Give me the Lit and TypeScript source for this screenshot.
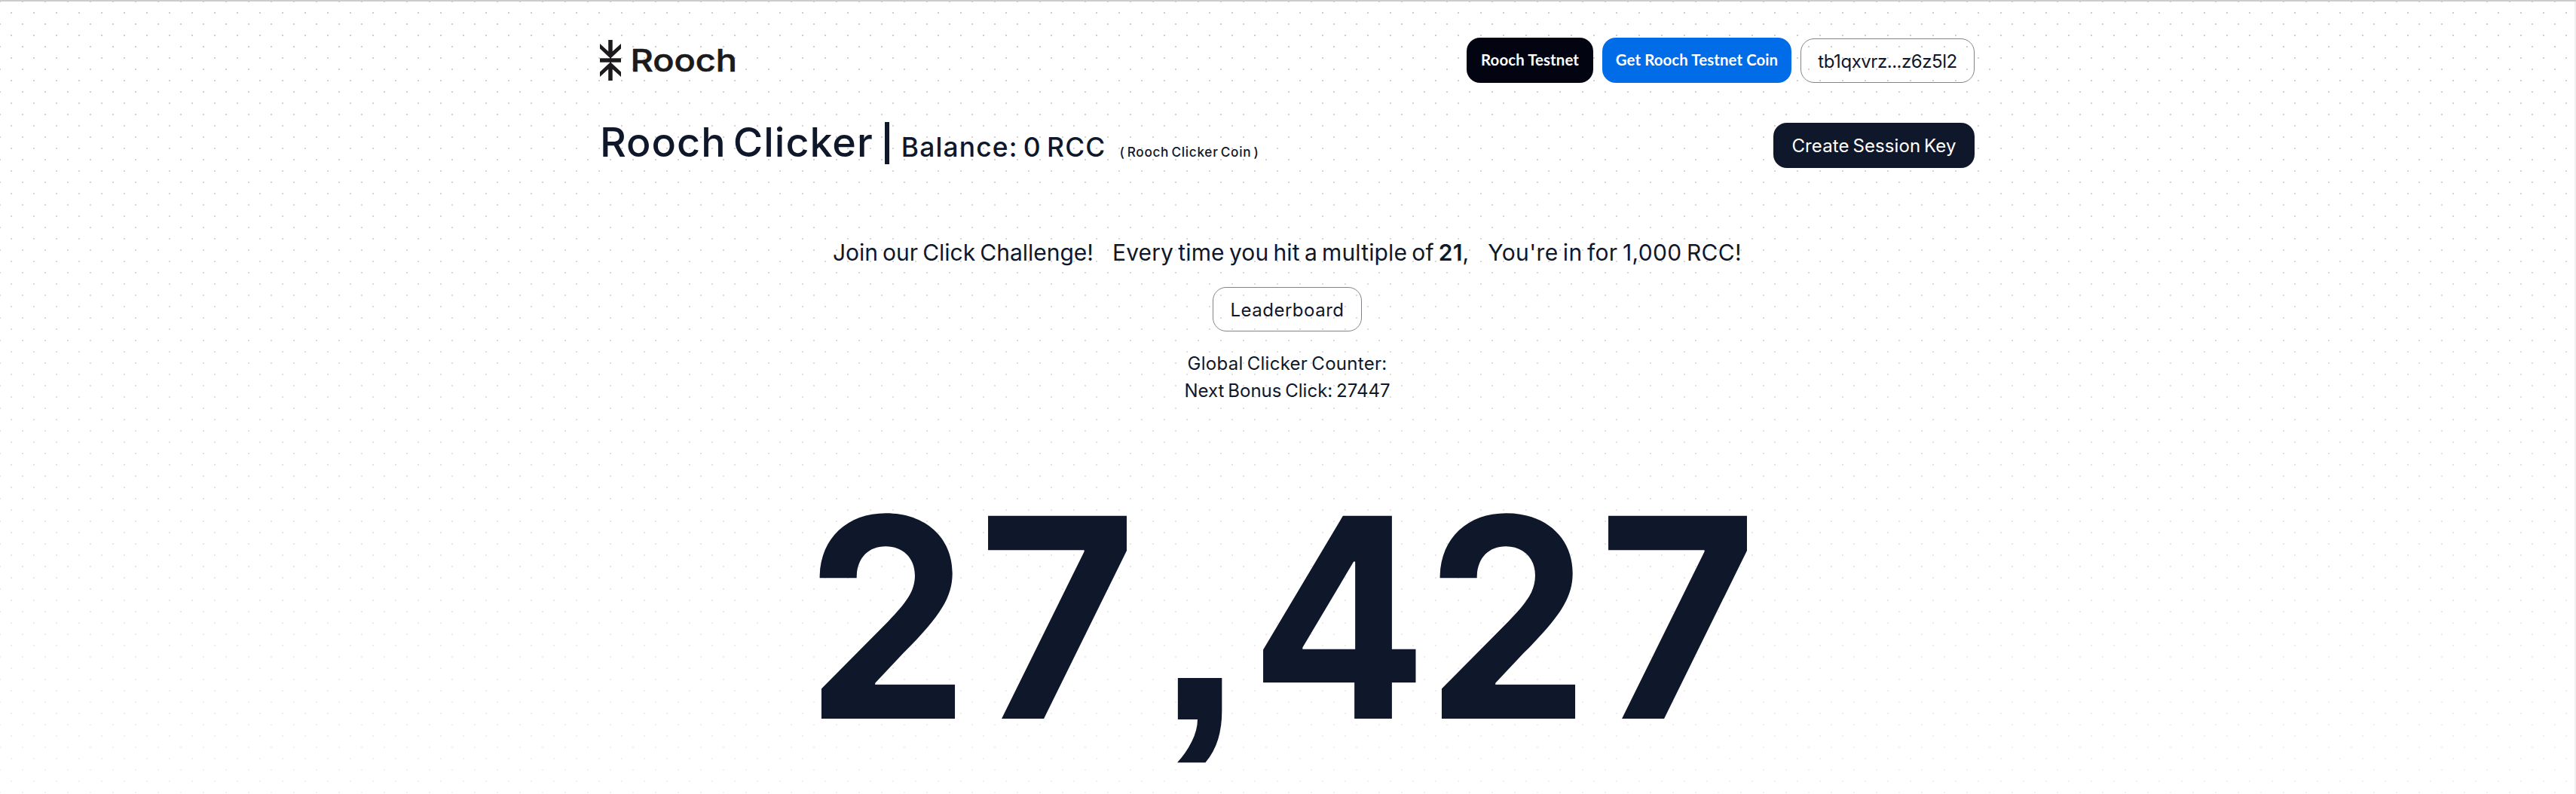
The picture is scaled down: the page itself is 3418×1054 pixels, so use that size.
import { LitElement, html, css, svg } from "lit";

class RoochLogo extends LitElement {
  static styles = css`
    :host { display: block; }
    .mark { display: block; font-family: Inter, "Liberation Sans", sans-serif; }
  `;
  render() {
    return html`<svg class="mark" width="184" height="54" viewBox="0 0 184 54" fill="#1c1a1c">
      <path d="M11.2 0h5.5v15.2L28 5v6.5L15.5 23.2h-3L0 11.5V5l11.2 10.2z" />
      <path d="M0 24.3h28v5.4H0z" />
      <path d="M13 23h2v8h-2z" />
      <path d="M11.2 54h5.5V38.8L28 49v-6.5L15.5 30.8h-3L0 42.5V49l11.2-10.2z" />
      ${svg`<text x="40.5" y="42" font-size="41" font-weight="500" stroke="#1c1a1c" stroke-width=".6" textLength="141.5" lengthAdjust="spacingAndGlyphs">Rooch</text>`}
    </svg>`;
  }
}
customElements.define("rooch-logo", RoochLogo);

class AppRoot extends LitElement {
  static styles = css`
    :host {
      display: block;
      box-sizing: border-box;
      height: 1054px;
      overflow: hidden;
      font-family: Inter, "Liberation Sans", sans-serif;
      color: #0f172a;
      background:
        linear-gradient(#ccc, #ccc) 0 0 / 100% 2px no-repeat,
        linear-gradient(#f0f0f0, #f0f0f0) 100% 0 / 2px 100% no-repeat,
        linear-gradient(rgba(255,255,255,0), rgba(255,255,255,0.75)),
        conic-gradient(from 90deg at 28px 28px, #ccc 25%, transparent 0) 1px 3px / 30px 30px,
        conic-gradient(from 90deg at 28px 28px, #ccc 25%, transparent 0) 16px 18px / 30px 30px,
        #fff;
    }
    .page { width: 1824px; margin: 0 auto; padding: 50px 2px 0 0; }
    .row { display: flex; justify-content: space-between; align-items: flex-start; }
    .logo { margin-top: 3px; }
    .actions { display: flex; gap: 12px; }
    .btn { box-sizing: border-box; height: 60px; border-radius: 18px; display: flex; align-items: center; justify-content: center; white-space: nowrap; font-size: 24px; }
    .small { font: 700 20.4px Lato, sans-serif; color: #fff; padding-bottom: 3px; letter-spacing: .1px; }
    .net { width: 168px; background: #020412; }
    .coin { width: 251px; background: #006ce8; }
    .outline { border: 1px solid #828289; height: 59px; }
    .addr { width: 231px; margin-top: 1px; letter-spacing: -0.46px; padding-top: 1px; }
    .second { margin-top: 53px; height: 60px; }
    .title { display: flex; align-items: baseline; font-weight: 500; white-space: pre; line-height: 60px; margin-top: -4px; }
    .h1 { font-size: 53.8px; letter-spacing: 1px; word-spacing: -6px; }
    .rule { width: 6px; height: 56px; background: #0f172a; margin: 3px 16px 0 15px; align-self: flex-start; }
    .bal { font-size: 35.4px; letter-spacing: 1.15px; word-spacing: -3.3px; }
    .rcc { font-size: 17.2px; letter-spacing: .7px; word-spacing: -2px; margin-left: 18px; }
    .create { width: 267px; background: #0f172a; color: #fff; letter-spacing: .1px; word-spacing: -2px; padding-top: 1px; }
    .join { margin-top: 92px; display: flex; justify-content: center; font-size: 30px; line-height: 40px; letter-spacing: 0; word-spacing: -2.4px; white-space: nowrap; }
    .join .mid { margin: 0 25px 0 25px; letter-spacing: .14px; }
    .join .end { letter-spacing: .35px; }
    .join b { font-weight: 600; }
    .lead { width: 198px; margin: 26px auto 0; letter-spacing: .5px; padding-top: 2px; }
    .stats { margin-top: 25px; text-align: center; font-size: 24px; line-height: 36px; word-spacing: -1.9px; letter-spacing: .28px; }
    .next { letter-spacing: 0; }
    .count { display: flex; justify-content: center; align-items: baseline; font-size: 370px; font-weight: 700; line-height: 370px; margin-top: 98px; padding-right: 9px; }
    .digit { display: flex; justify-content: center; }
    .two { width: 179px; transform: scaleX(.93); }
    .seven { width: 184px; margin-left: 45px; transform: translateX(-1px) scaleX(.978); }
    .comma { width: 61px; margin: 0 54px 0 65px; font-family: "Liberation Sans", sans-serif; transform: translateY(1px) scaleX(1.12); }
    .four { width: 203px; margin-right: 32px; transform: translateX(-1px) scaleX(.94); }
  `;
  render() {
    const names: Record<string, string> = { "2": "two", "7": "seven", ",": "comma", "4": "four" };
    return html`<div class="page">
      <div class="row">
        <rooch-logo class="logo"></rooch-logo>
        <div class="actions">
          <div class="btn small net">Rooch Testnet</div>
          <div class="btn small coin">Get Rooch Testnet Coin</div>
          <div class="btn outline addr">tb1qxvrz...z6z5l2</div>
        </div>
      </div>
      <div class="row second">
        <div class="title"><span class="h1">Rooch Clicker</span><span class="rule"></span><span class="bal">Balance: 0 RCC</span><span class="rcc">( Rooch Clicker Coin )</span></div>
        <div class="btn create">Create Session Key</div>
      </div>
      <div class="join">
        <span>Join our Click Challenge!</span>
        <span class="mid">Every time you hit a multiple of <b>21</b>,</span>
        <span class="end">You're in for 1,000 RCC!</span>
      </div>
      <div class="btn outline lead">Leaderboard</div>
      <div class="stats">
        <div>Global Clicker Counter:</div>
        <div class="next">Next Bonus Click: 27447</div>
      </div>
      <div class="count">${[..."27,427"].map((ch) => html`<span class="digit ${names[ch]}">${ch}</span>`)}</div>
    </div>`;
  }
}
customElements.define("app-root", AppRoot);
